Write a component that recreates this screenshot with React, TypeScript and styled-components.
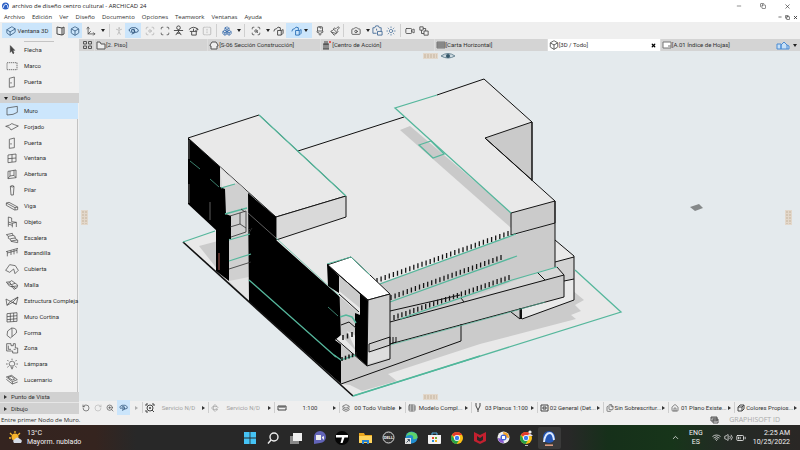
import React from 'react';
import styled, { createGlobalStyle, css } from 'styled-components';
import {
  Box, Camera, ChevronUp, Cloud, Copy, Focus, Layers, Minus, Move3d,
  PersonStanding, RotateCcw, RotateCw, Scan, Video, Volume2, Wifi, X, ZoomIn, Paintbrush,
  Paintbrush2, Boxes, ScanSearch, Rotate3d, FlipHorizontal, BatteryMedium,
  Sun, Home, Table, Files, Cuboid,
} from 'lucide-react';

const Global = createGlobalStyle`
  * { box-sizing: border-box; }
  html, body, #root { height: 100%; }
  body { margin: 0; overflow: hidden; }
  button { border: 0; padding: 0; background: none; color: inherit; font: inherit; }
  svg { display: block; flex: none; }
`;

const compact = css` font-family: Roboto, "Noto Sans", sans-serif; `;

const Page = styled.div`
  display: flex; flex-direction: column; min-height: 100vh; height: 100%;
  background: #efefef; color: #303030; font: 6px/8px "Open Sans", "Noto Sans", sans-serif;
  white-space: nowrap;
`;
const TitleBar = styled.header`
  display: flex; align-items: center; gap: 3px; height: 12px; padding: 0 9px 0 2px;
  background: #fff; color: #222;
`;
const Title = styled.h1` margin: 0; flex: 1; font: inherit; `;
const WindowButtons = styled.div<{ $gap: number }>`
  display: flex; align-items: center; gap: ${p => p.$gap}px;
`;
const MenuBar = styled.nav`
  display: flex; align-items: center; height: 10px; padding: 0 2px 0 4px; gap: 7px; background: #fff;
`;
const MenuItem = styled.button` line-height: 10px; `;
const Spacer = styled.div` flex: 1; `;

const Toolbar = styled.div`
  display: flex; align-items: center; height: 17px; padding-left: 2px; background: #efefef;
`;
const Tool = styled.button<{ $w: number; $on?: boolean; $dim?: boolean }>`
  display: flex; align-items: center; justify-content: center; gap: 2px;
  width: ${p => p.$w}px; height: 15px; color: #454545;
  ${p => p.$on && css`background: #cbe5fb; color: #31577e;`}
  ${p => p.$dim && css`opacity: .35;`}
`;
const ViewLabel = styled.span` color: #333; ${compact} `;
const Rule = styled.span`
  width: 1px; height: 13px; margin: 0 2px; background: #cfcfcf; flex: none;
`;
const Caret = styled.span<{ $right?: boolean }>`
  width: 0; height: 0; border: 2px solid transparent; flex: none;
  ${p => p.$right
    ? css`border-left: 3px solid #333; border-right: 0;`
    : css`border-top: 3px solid #222; border-bottom: 0;`}
`;

const Work = styled.div` display: flex; flex: 1; min-height: 0; `;
const Sidebar = styled.aside`
  display: flex; flex-direction: column; width: 79px; background: #f0f0f0; ${compact}
`;
const SelectGroup = styled.div`
  display: grid; grid-auto-rows: 16px; margin-right: 4px; padding-bottom: 3px;
`;
const Divider = styled.div` height: 1px; margin: 2px 25px 0 24px; background: #c4c4c4; `;
const Section = styled.button`
  display: flex; align-items: center; gap: 4px; height: 10px; padding-left: 4px; background: #d1d1d1;
  & + & { border-top: 1px solid #e6e6e6; height: 12px; }
`;
const ToolList = styled.div`
  flex: 1; min-height: 0; display: grid; grid-template-rows: repeat(18, 1fr);
  padding-bottom: 4px; margin-right: 1px; border-right: 1px solid #c2c2c2;
  padding-right: 2px;
`;
const ToolRow = styled.button<{ $on?: boolean }>`
  display: flex; align-items: center; gap: 5px; padding-left: 5px; text-align: left; min-height: 0;
  ${p => p.$on && css`background: #cce6fc;`}
`;

const Main = styled.main` display: flex; flex-direction: column; flex: 1; min-width: 0; `;
const Tabs = styled.div`
  display: flex; height: 12px; background: #d4d4d4; align-items: stretch; padding-left: 1px; ${compact}
`;
const TabIcon = styled.button<{ $w: number }>`
  width: ${p => p.$w}px; display: flex; align-items: center; justify-content: center; gap: 3px;
`;
const Tab = styled.button<{ $on?: boolean }>`
  flex: 1; display: flex; align-items: center; padding: 0 4px 0 1px; min-width: 0;
  border-left: 1px solid #dedede; background: ${p => (p.$on ? '#fff' : 'transparent')};
`;
const TabText = styled.span` flex: 1; text-align: left; `;
const Viewport = styled.div`
  flex: 1; min-height: 0; background: #e4eaed;
  > svg { width: 100%; height: 100%; }
`;
const Options = styled.div` display: flex; align-items: center; height: 13px; ${compact} `;
const NavTools = styled.div` display: flex; align-items: center; width: 63px; `;
const Option = styled.button<{ $dim?: boolean }>`
  flex: 1; min-width: 0; display: flex; align-items: center; height: 11px; gap: 1px;
  padding: 0 3px 0 2px; border-left: 1px solid #cecece; color: ${p => (p.$dim ? '#a2a2a2' : '#333')};
  & svg { color: ${p => (p.$dim ? '#9a9a9a' : '#444')}; }
`;
const OptionText = styled.span` flex: 1; text-align: center; `;
const Status = styled.footer`
  display: flex; align-items: center; height: 11px; padding: 0 20px 0 1px; gap: 10px;
`;
const Brand = styled.span` color: #aaa; font: 7px/9px "Open Sans", sans-serif; `;

const Taskbar = styled.footer`
  display: grid; grid-template-columns: 1fr auto 1fr; align-items: center; height: 25px;
  color: #f2f2f2; padding: 0 10px 0 9px; font-size: 7px; line-height: 9px; ${compact}
  background: linear-gradient(90deg, #342420 0%, #35241f 12%, #282828 17%, #282828 71%, #16301a 76%, #17351a 84%, #242a25 91%, #2a2725 100%);
`;
const Weather = styled.div` display: flex; align-items: center; gap: 3px; `;
const Apps = styled.div` display: flex; `;
const TaskApp = styled.button<{ $on?: boolean }>`
  width: 23px; height: 22px; display: flex; align-items: center; justify-content: center;
  border-radius: 2px; background: ${p => (p.$on ? '#3a3a3a' : 'transparent')};
`;
const Tray = styled.div`
  display: flex; align-items: center; justify-content: flex-end; gap: 3px; text-align: center;
`;
const Language = styled.div` margin: 0 6px 0 6px; `;
const Clock = styled.time` text-align: right; margin-left: 4px; `;

const palette: Record<string, string> = {
  Flecha: 'M16 5 L16 25 L20 20 L24 29 L27 27 L23 19 L29 19Z',
  Marco: 'M6 8 H36 V29 H6Z',
  Puerta: 'M13 7 L28 3 V32 L13 34Z M18 18 v5',
  Muro: 'M6 9 L37 4 V22 L24 28 L6 30Z',
  Forjado: 'M2 16 L14 12 Q20 4 28 11 L40 15 L18 27 Q15 17 2 16Z',
  Ventana: 'M9 9 L33 6 V29 L9 32Z M21 8 V30 M9 20 L33 18',
  Abertura: 'M9 10 L33 6 V29 L9 32Z M15 9 V24 L27 22 V7 M9 31 L15 24 M27 22 L33 29',
  Pilar: 'M16 7 Q22 2 27 7 L25 33 H18Z M16 7 Q22 11 27 7',
  Viga: 'M4 9 L12 7 L38 21 V29 L29 30 L4 16Z M4 9 L30 23 L38 21 M30 23 V30',
  Objeto: 'M10 3 L20 6 V17 L34 19 V33 M10 3 V32 M10 18 L22 22 L34 19 M22 22 V34 M10 24 L22 28',
  Escalera: 'M4 8 L22 4 L24 10 L30 13 L31 20 L38 24 L38 32 L18 28 L16 22 L10 19 L10 13 L4 8 M10 13 L24 10 M16 20 L31 18 M18 27 L36 24',
  Barandilla: 'M3 14 L39 4 M7 13 V28 M18 10 V24 M27 8 V22 M36 5 V19 M7 18 L36 10',
  Cubierta: 'M2 22 L14 5 L31 8 L40 22 L30 32 L26 18 L14 28 L2 22',
  Malla: 'M4 9 Q14 12 20 5 L38 18 Q40 27 27 31 Q24 21 13 21Z M12 7 Q18 20 33 29 M8 14 Q20 20 30 13 M18 23 L36 21',
  'Estructura Compleja': 'M3 12 L16 19 L39 6 L34 28 L23 22 L6 31 L16 19 L34 28 M3 12 L6 31 M23 22 L39 6',
  'Muro Cortina': 'M6 8 L36 5 V31 L6 33Z M16 7 V32 M26 6 V32 M6 17 L36 14 M6 26 L36 23',
  Forma: 'M20 3 L8 12 L6 25 L16 33 L21 29 L21 9Z M20 3 Q38 3 34 18 L21 29',
  Zona: 'M5 5 H18 V11 H25 V5 H31 V18 H38 V33 H23 V27 H5Z M10 11 V22 H18 M26 22 h6',
  'Lámpara': 'M15 24 Q9 17 16 11 Q22 7 28 13 Q32 18 26 24Z M17 28 H25 M18 32 H24 M21 2 V6 M7 6 L11 10 M35 6 L31 10 M3 18 H8 M34 18 H39 M7 28 L11 25 M35 28 L31 25',
  Lucernario: 'M4 9 L20 4 L37 17 L22 23Z M4 16 L22 30 L38 24 M22 23 V30 M9 10 L19 7 L29 15 L22 18Z',
};

const Glyph = ({ name }: { name: string }) => (
  <svg width="14" height="12" viewBox="0 0 42 36" fill={name === 'Flecha' ? '#444' : 'none'} stroke="#444"
    strokeWidth="2.1" strokeLinejoin="round" strokeDasharray={name === 'Marco' ? '4 2' : undefined}>
    <path d={palette[name]} />
  </svg>
);

const toolbarGlyphs = {
  orbit: 'M3 8Q-1 5 4 3Q9 2 11 5Q12 8 8 8M4 10L8 8L6 5M4 5h3v3H4z',
  survey: 'M6 1a2 2 0 0 1 0 4a2 2 0 0 1 0-4M1 6h10M6 5v3M3 11l3-4l3 4M4 9h4',
  around: 'M1 5Q6 0 11 5M2 7h8M4 7v4h5V7M6 4v3M9 3l2 2l-3 1',
  cloudBox: 'M1 7Q1 4 4 4Q5 1 8 3L8 6M5 6h4v5H5zM9 6l2-1v4l-2 2',
  photoSet: 'M1 3h2l1-2h3l1 2h2v4M1 3v6h4M6 7h5v4H6zM5 4v2',
  route: 'M1 1h4v4H1zM5 3h3v3M6 6h5v5H6zM3 5v4h3',
};
const Mark = ({ name, color = 'currentColor', size = 11 }: { name: keyof typeof toolbarGlyphs; color?: string; size?: number }) => (
  <svg width={size} height={size} viewBox="0 0 12 12" fill="none" stroke={color} strokeLinejoin="round">
    <path d={toolbarGlyphs[name]} />
  </svg>
);

const tools = ['Muro', 'Forjado', 'Puerta', 'Ventana', 'Abertura', 'Pilar', 'Viga', 'Objeto', 'Escalera', 'Barandilla',
  'Cubierta', 'Malla', 'Estructura Compleja', 'Muro Cortina', 'Forma', 'Zona', 'Lámpara', 'Lucernario'];

const I = { size: 10, strokeWidth: 1.9 };
const S = { size: 8, strokeWidth: 1.9 };

const ticks = (x1: number, y1: number, x2: number, y2: number, n: number, h: number) =>
  Array.from({ length: n }, (_, i) => {
    const t = i / (n - 1);
    return `M${(x1 + (x2 - x1) * t).toFixed(1)} ${(y1 + (y2 - y1) * t).toFixed(1)}v${h}`;
  }).join('');

const Handle = ({ x, y, tall }: { x: number; y: number; tall?: boolean }) => (
  <g>
    <rect x={x} y={y} width={tall ? 7 : 15} height={tall ? 15 : 6} fill="#e3d8cb" />
    <path stroke="#c5b49d" strokeWidth="1" strokeDasharray="2 1"
      d={tall ? `M${x + 2} ${y + 1}v13M${x + 5} ${y + 1}v13` : `M${x + 1} ${y + 2}h13M${x + 1} ${y + 4}h13`} />
  </g>
);

const Model = () => (
  <svg viewBox="79 51 721 350" preserveAspectRatio="xMidYMid meet" role="img" aria-label="3D">
    {/* site plate and cast shadows */}
    <path fill="#e9e9e9" d="M183 242L215 231L574 268L621 312L353 396Z" />
    <path fill="#cbcbcb" d="M199 246L218 241V270Z" />
    <path fill="#cbcbcb" d="M350 385L362 391L397 381L388 374L480 344L576 319L571 315L581 311L575 305L584 300L572 290L461 310L341 360V384Z" />
    {/* roof deck */}
    <path fill="#e9e9e9" d="M276 217L298 151L404 117L512 212V236L380 283L340 297L276 240Z" />
    <path fill="#c9c9c9" d="M400 130L410 126L511 212V228Z" />
    {/* front facades */}
    <path fill="#cbcbcb" d="M380 283L512 236L555 223V267L564 275V297L461 324V341L341 384V296Z" />
    <path fill="#e9e9e9" d="M555 240L574 256V300L522 319V308L564 297V275L555 267Z" />
    <path fill="#d2d2d2" d="M555 262L574 257V279L564 281V275L555 267Z" />
    <path fill="#d8d8d8" d="M463 301L537 272L557 267L564 275Z" />
    {/* left volume */}
    <path fill="#e9e9e9" stroke="#151515" d="M188 138L259 115L346 196L276 217Z" />
    <path fill="#d9d9d9" stroke="#151515" d="M276 217L346 196V217L276 240Z" />
    <path fill="#d0d0d0" d="M220 167L249 193V302L229 284V220L220 190Z" />
    <path fill="#e4e4e4" d="M220 168L237 183L222 187ZM229 281L249 277V302Z" />
    <path d="M188 138L220 167V187L225 189L226 214L231 216V240L217 231L188 204Z" />
    <path d="M216 229H229V281L216 271Z" />
    <path d="M248 193L276 217V240L340 297L358 313V323L341 316V384L249 302Z" />
    {/* upper right volume */}
    <path fill="#e9e9e9" d="M395 108L484 79L532 122L485 138L555 201L511 213Z" />
    <path fill="#cacaca" stroke="#151515" d="M485 138L532 122V180Z" />
    <path fill="#cbcbcb" stroke="#151515" d="M511 213L555 201V223L511 235Z" />
    {/* black edges */}
    <g fill="none" stroke="#101010">
      <path d="M298 151L404 117M437 95L484 79L532 122V181M485 138L555 201V267" />
      <path d="M555 240L574 256V300L522 319M555 262L574 257M564 281L574 279M511 312L520 319V308" />
      <path d="M390 322L564 275L557 267M564 275V297L390 344M537 272L545 280" />
      <path d="M390 311L460 295M461 324V341L341 384M461 298L464 302" />
      <path strokeWidth="2" d="M521 308V319" />
      <path strokeWidth="1.6" d="M183 242L353 396" />
    </g>
    {/* handrail posts */}
    <path stroke="#151515" strokeWidth="1.3" d={ticks(377, 278, 508, 231, 33, 5)} />
    <path stroke="#151515" strokeWidth="1.3" d={ticks(391, 295, 501, 255, 28, 5)} />
    <path stroke="#151515" strokeWidth="1.3" d={ticks(394, 315, 509, 275, 30, 5)} />
    {/* slab lines */}
    <g fill="none" stroke="#55b79c" strokeWidth="1.3">
      <path d="M346 196L259 115M183 242L215 231M437 95L395 108L511 213M353 396L621 312L575 270" />
      <path d="M380 284L516 234M390 302L517 256M400 319L512 280L557 267M249 280L336 357" />
      <path d="M419 145L431 141L444 154L433 158Z" />
      <path d="M221 188L235 184M225 214L247 208M229 240L250 234M229 261L251 254" />
      <path strokeWidth="0.7" d="M390 345L500 315L545 302M276 238L356 311M190 161L200 169M210 179L219 187M328 307L338 316" />
    </g>
    <path fill="none" stroke="#303030" strokeWidth="0.8" d="M230 216L246 211V232L231 237M230 227L240 224L246 228M240 224V213M229 269L251 262M241 209l4 3M248 228l3 3m1-3l-3 5" />
    <path fill="none" stroke="#777" strokeWidth="0.8" d="M248 213L276 238M189 140V159M189 184V203M210 202V220" />
    <path stroke="#a75a50" d="M219 253V270" />
    {/* projecting frame */}
    <path fill="#cbcbcb" d="M339 276L360 293V314L356 315V353L341 341Z" />
    <path fill="#e9e9e9" d="M339 291L360 308V314L339 296ZM335 340L341 335L356 351V356ZM347 331L356 336V350Z" />
    <path fill="#fff" stroke="#151515" d="M327 265L351 257L390 294L368 300Z" />
    <path stroke="#55b79c" d="M327 264L351 257L370 275" fill="none" />
    <path fill="#cfcfcf" stroke="#151515" d="M368 300L390 294V359L367 366Z" />
    <path d="M327 264L339 276V293L328 286ZM360 293L368 300L367 366L355 355V313L360 315Z" />
    <path fill="none" stroke="#151515" d="M327 264L368 301M339 294L359 312M341 325L349 322L356 328M336 339L367 366" />
    <path fill="#dedede" d="M368 353L389 347V358L368 364Z" />
    <path fill="none" stroke="#151515" d="M369 344L390 337V345L369 352ZM390 344L396 342V337M393 337V343" />
    <path fill="none" stroke="#55b79c" strokeWidth="1.5" d="M340 317L346 315L352 317L356 323M334 355L341 360L356 355" />
    <path stroke="#151515" strokeWidth="1.5" d={ticks(343, 335, 352, 332, 3, 5) + ticks(342, 357, 356, 352, 5, 4)} />
    <path stroke="#50b79b" strokeWidth="1.8" d="M353 396L480 356" />
    {/* origin marker, page handles and view centre */}
    <path fill="#85898a" d="M690 207L699 204L703 208L695 211Z" />
    <Handle x={423} y={53} /><Handle x={423} y={394} />
    <Handle x={81} y={210} tall /><Handle x={785} y={210} tall />
    <path fill="#cbd8df" stroke="#6b8795" d="M441 56Q448 51 455 56Q448 60 441 56" />
    <circle cx="448" cy="56" r="2" fill="#35576a" />
  </svg>
);

const options: [React.ReactNode, string, boolean?][] = [
  [<svg width="10" height="10" viewBox="0 0 10 10" fill="none" stroke="#444"><circle cx="5" cy="5" r="3" /><path d="M7 7l2 2M1 3V1h2M7 1h2v2M1 7v2h2M4 5h2M5 4v2" /></svg>, 'Servicio N/D', true],
  [<Rotate3d {...S} />, 'Servicio N/D', true],
  [<svg width="10" height="6" viewBox="0 0 10 6" fill="none" stroke="currentColor"><path d="M1 1h8v4H1zM3 1v2M5 1v2M7 1v2" /></svg>, '1:100'],
  [<Layers {...S} />, '00 Todo Visible'],
  [<Table {...S} />, 'Modelo Compl...'],
  [<svg width="8" height="9" viewBox="0 0 8 9" fill="none" stroke="currentColor"><path d="M2 0v3l2 4 2-4V0M4 7v2" /></svg>, '03 Planos 1:100'],
  [<svg width="9" height="8" viewBox="0 0 9 8" fill="none" stroke="currentColor"><path d="M1 1h7v6H1zM3 3h3v2H3z" /></svg>, '02 General (Det...'],
  [<Files {...S} />, 'Sin Sobrescritur...'],
  [<Home {...S} />, '01 Plano Existe...'],
  [<svg width="8" height="8" viewBox="0 0 8 8" fill="none" stroke="currentColor"><path d="M1 3h4v4H1zM1 3l2-2h4v4L5 7M5 3l2-2" /></svg>, 'Colores Propios...'],
];

const tabs: [React.ReactNode, string][] = [
  [<svg width="10" height="9" viewBox="0 0 10 9" fill="#eee" stroke="#555"><path d="M1 1h3l1 2h4v5H1z" /></svg>, '[2. Piso]'],
  [<svg width="10" height="9" viewBox="0 0 10 9" fill="#eee" stroke="#555"><path d="M1 4l2-3h4l2 3v1H8v3H2V5H1z" /></svg>, '[S-06 Sección Construcción]'],
  [<svg width="10" height="9" viewBox="0 0 10 9" fill="none" stroke="#444"><path d="M1 8h6M2 8V3h4v5M1 3h6M2 1h4M4 3v5" /><circle cx="8" cy="1" r="1" fill="#e33" stroke="none" /></svg>, '[Centro de Acción]'],
  [<svg width="10" height="8" viewBox="0 0 10 8" fill="#999" stroke="#777"><path d="M1 1h8v6H1zM1 3h8M1 5h8" /></svg>, '[Carta Horizontal]'],
  [<Box size={10} strokeWidth={2} color="#444" />, '[3D / Todo]'],
  [<svg width="10" height="8" viewBox="0 0 10 8" fill="#fff" stroke="#777"><path d="M1 1h8v6H1zM6 5h3" /></svg>, '[A.01 Índice de Hojas]'],
];

const ChromeMark = ({ badge }: { badge?: boolean }) => (
  <svg width="14" height="16" viewBox="0 0 14 16">
    <circle cx="7" cy="8" r="6" fill="#fbc116" />
    <path fill="#e33b2e" d="M7 8L1.8 5A6 6 0 0 1 12.2 5H7Z" />
    <path fill="#27a349" d="M7 8L4.5 9.5L1.8 5A6 6 0 0 0 6.5 14L9.5 9.5Z" />
    <circle cx="7" cy="8" r="3" fill="#fff" /><circle cx="7" cy="8" r="2.2" fill="#3d7df0" />
    {badge && <><circle cx="11" cy="2" r="1.6" fill="#eee" /><path fill="#dde" d="M8 6Q11 2 14 6Z" /><path stroke="#bbb" d="M6 15.5h3" /></>}
  </svg>
);

const apps: [string, React.ReactNode][] = [
  ['Inicio', <svg width="12" height="12" viewBox="0 0 12 12" fill="#45c3f5"><path d="M0 0h5.6v5.6H0zM6.4 0H12v5.6H6.4zM0 6.4h5.6V12H0zM6.4 6.4H12V12H6.4z" /></svg>],
  ['Buscar', <svg width="12" height="12" viewBox="0 0 12 12" fill="none" stroke="#eee" strokeWidth="1.4"><circle cx="7" cy="5" r="4" /><path d="M4 8L1 11.5" /></svg>],
  ['Vista de tareas', <svg width="14" height="12" viewBox="0 0 14 12"><path fill="#888" d="M1 4h9v8H1z" /><path fill="#eee" d="M4 1h9v8H4z" /></svg>],
  ['Chat', <svg width="13" height="13" viewBox="0 0 13 13"><path fill="#6264b8" d="M1 13V6A6 6 0 1 1 7 12Z" /><path fill="#eee" d="M3 4h5v5H3zM9 6l2-1v4L9 7z" /></svg>],
  ['T', <svg width="14" height="14" viewBox="0 0 14 14"><circle cx="7" cy="7" r="7" fill="#050505" /><path fill="#fff" d="M1 4h12v2.5H9.5L7.5 12H5.5L7 6.5H1z" /></svg>],
  ['Archivos', <svg width="13" height="12" viewBox="0 0 13 12"><path fill="#e9a51e" d="M0 1h5l1 2h7v8H0z" /><path fill="#ffd45c" d="M0 4h13v7H0z" /><path fill="#2a84d2" d="M3 8h7v4H8v-2H5v2H3z" /></svg>],
  ['Dell', <svg width="13" height="13" viewBox="0 0 13 13"><circle cx="6.5" cy="6.5" r="5.5" fill="#333" stroke="#ddd" /><text x="6.5" y="8" fontSize="4" fontWeight="700" fill="#eee" textAnchor="middle">DELL</text></svg>],
  ['Edge', <svg width="13" height="13" viewBox="0 0 13 13"><circle cx="6.5" cy="6.5" r="6" fill="#218ed1" /><path fill="#5ed26a" d="M6 1Q13 1 12.5 7Q10 9 8 8Q9 4 5 4Q2 4 1 6Q2 1 6 1" /><path fill="#ddd" d="M0 7h6v6H0z" /><path stroke="#456" d="M1.500 11.500l3-3M2.500 8.500h2v2" fill="none" /></svg>],
  ['Store', <svg width="13" height="12" viewBox="0 0 13 12"><path fill="none" stroke="#50aee4" d="M4 3V1h5v2" /><path fill="#f2f2f2" d="M0 3h13v8q0 1-1 1H1q-1 0-1-1z" /><path fill="#e64d2e" d="M4 5h2v2H4z" /><path fill="#70ae31" d="M7 5h2v2H7z" /><path fill="#2a90d4" d="M4 8h2v2H4z" /><path fill="#f0b323" d="M7 8h2v2H7z" /></svg>],
  ['Chrome', <ChromeMark />],
  ['McAfee', <svg width="12" height="12" viewBox="0 0 12 12" fill="#c3202f"><path d="M0 0L6 3L12 0V9L6 12L0 9ZM3 4V8L6 9.500L9 8V4L6 6Z" fillRule="evenodd" /></svg>],
  ['Navegador', <svg width="13" height="13" viewBox="0 0 13 13"><circle cx="6.5" cy="6.5" r="6" fill="#eee" /><path fill="#f2a32b" d="M6 1Q12 1 12 7L7 6Z" /><path fill="#8a5bd0" d="M1 7Q1 12 7 12L6 8Z" /><circle cx="6.5" cy="6.5" r="3" fill="#4165d8" /><path fill="#fff" d="M5 5h3v3H5z" /></svg>],
  ['Chrome perfil', <ChromeMark badge />],
  ['Archicad', <svg width="14" height="17" viewBox="0 0 14 17"><circle cx="7" cy="8" r="6" fill="#2456b5" /><path d="M2 13Q3 4 8 4Q11 4 12 11" fill="none" stroke="#dceaff" strokeWidth="2" /><path stroke="#e4a184" strokeWidth="1.5" d="M3 16.200h8" /></svg>],
];

export default function App() {
  return (
    <Page>
      <Global />
      <TitleBar>
        <svg width="7" height="8" viewBox="0 0 7 8"><circle cx="3.500" cy="4" r="3.500" fill="#2c5fc4" /><path d="M1 6Q2 2 4 2Q6 3 6 6" fill="none" stroke="#dce9ff" /></svg>
        <Title>archivo de diseño centro cultural - ARCHICAD 24</Title>
        <WindowButtons $gap={18}>
          <button aria-label="Minimizar"><Minus size={6} /></button>
          <button aria-label="Restaurar"><Copy size={6} /></button>
          <button aria-label="Cerrar"><X size={7} /></button>
        </WindowButtons>
      </TitleBar>
      <MenuBar>
        {['Archivo', 'Edición', 'Ver', 'Diseño', 'Documento', 'Opciones', 'Teamwork', 'Ventanas', 'Ayuda'].map(m => <MenuItem key={m}>{m}</MenuItem>)}
        <Spacer />
        <WindowButtons $gap={3}>
          <button aria-label="Minimizar vista"><Minus size={4} strokeWidth={4} /></button>
          <button aria-label="Restaurar vista"><Copy size={5} strokeWidth={3} /></button>
          <button aria-label="Cerrar vista"><X size={5} strokeWidth={4} /></button>
        </WindowButtons>
      </MenuBar>
      <Toolbar>
        <Tool $w={50} $on><Cuboid {...I} /><ViewLabel>Ventana 3D</ViewLabel></Tool>
        <Tool $w={16} aria-label="Perspectiva"><svg width="9" height="10" viewBox="0 0 9 10" fill="none" stroke="currentColor"><path d="M1 1l5 1v7L1 8zM6 2l2-1v7L6 9" /></svg></Tool>
        <Tool $w={14} $on aria-label="Axonometría"><Box {...I} /></Tool>
        <Tool $w={17} aria-label="Proyección"><Move3d {...I} /></Tool>
        <Tool $w={8} aria-label="Más proyecciones"><Caret /></Tool><Rule />
        <Tool $w={13} $dim aria-label="Caminar"><PersonStanding {...I} /></Tool>
        <Tool $w={16} $on aria-label="Orbitar"><Mark name="orbit" /></Tool>
        <Tool $w={18} $dim aria-label="Explorar"><Focus {...I} /></Tool>
        <Tool $w={12} aria-label="Encuadrar"><Scan {...I} /></Tool>
        <Tool $w={15} aria-label="Mirar"><Mark name="survey" /></Tool>
        <Tool $w={14} aria-label="Rotar"><Mark name="around" /></Tool>
        <Tool $w={14} $dim aria-label="Reflejar"><FlipHorizontal {...I} /></Tool><Rule />
        <Tool $w={16} aria-label="Filtrar"><Boxes {...I} color="#3c6fae" /></Tool>
        <Tool $w={7} aria-label="Más filtros"><Caret /></Tool><Rule />
        <Tool $w={18} aria-label="Selección"><ScanSearch {...I} /></Tool>
        <Tool $w={6} aria-label="Más selección"><Caret /></Tool>
        <Tool $w={15} aria-label="Plano de corte"><Mark name="cloudBox" /></Tool>
        <Tool $w={26} $on aria-label="Estilo 3D"><Mark name="cloudBox" color="#2b70b8" /><Caret /></Tool>
        <Tool $w={16} aria-label="Pintar"><Paintbrush2 {...I} /></Tool>
        <Tool $w={13} aria-label="Pintar todo"><Paintbrush {...I} /></Tool><Rule />
        <Tool $w={19} aria-label="Foto"><Camera {...I} /></Tool>
        <Tool $w={6} aria-label="Más foto"><Caret /></Tool>
        <Tool $w={13} aria-label="Ajustes"><Mark name="photoSet" color="#476d99" /></Tool>
        <Tool $w={14} aria-label="Sol"><Sun {...I} color="#587ca2" /></Tool><Rule />
        <Tool $w={13} aria-label="Vídeo"><Video {...I} /></Tool>
        <Tool $w={15} aria-label="Recorrido"><Mark name="route" size={10} /></Tool>
      </Toolbar>
      <Work>
        <Sidebar>
          <Divider />
          <SelectGroup>
            {['Flecha', 'Marco', 'Puerta'].map(t => <ToolRow key={t}><Glyph name={t} />{t}</ToolRow>)}
          </SelectGroup>
          <Section><Caret />Diseño</Section>
          <ToolList>
            {tools.map((t, i) => <ToolRow key={t} $on={i === 0}><Glyph name={t} />{t}</ToolRow>)}
          </ToolList>
          <Section><Caret $right />Punto de Vista</Section>
          <Section><Caret $right />Dibujo</Section>
        </Sidebar>
        <Main>
          <Tabs>
            <TabIcon $w={14} aria-label="Pestañas"><svg width="9" height="8" viewBox="0 0 9 8" fill="none" stroke="#555"><path d="M.5.5h3v2.500h-3zM5.500.5h3v2.500h-3zM.5 5h3v2.500h-3zM5.500 5h3v2.500h-3z" /></svg></TabIcon>
            {tabs.map(([icon, t], i) => (
              <Tab key={t} $on={i === 4}>{icon}<TabText>{t}</TabText>{i === 4 && <X size={5} strokeWidth={6} color="#000" />}</Tab>
            ))}
            <TabIcon $w={27} aria-label="Navegador">
              <svg width="14" height="9" viewBox="0 0 14 9" fill="#c7e0f7" stroke="#4b8bd3"><path d="M1 3h4v5H1zM5 8V4l3-3 3 3v4zM11 4l2 1v3h-2" /></svg><Caret />
            </TabIcon>
          </Tabs>
          <Viewport><Model /></Viewport>
          <Options>
            <NavTools>
              <Tool $w={13} aria-label="Deshacer"><RotateCcw {...S} /></Tool>
              <Tool $w={11} $dim aria-label="Rehacer"><RotateCw {...S} /></Tool>
              <Tool $w={14} aria-label="Ampliar"><ZoomIn {...S} /></Tool>
              <Tool $w={13} $on aria-label="Órbita"><Mark name="orbit" size={9} /></Tool>
              <Tool $w={12} $dim aria-label="Siguiente"><Caret $right /></Tool>
            </NavTools>
            {options.map(([icon, t, dim], i) => (
              <Option key={i} $dim={dim}>{icon}<OptionText>{t}</OptionText><Caret $right /></Option>
            ))}
          </Options>
        </Main>
      </Work>
      <Status>
        Entre primer Nodo de Muro.
        <Spacer />
        <svg width="9" height="8" viewBox="0 0 9 8" fill="#efefef" stroke="#555"><path d="M1 1h6v4H1zM1 2h6M3 3h5v4H3zM3 4h5" /></svg>
        <Brand>GRAPHISOFT ID</Brand>
      </Status>
      <Taskbar>
        <Weather>
          <svg width="15" height="14" viewBox="0 0 15 14"><path stroke="#f2b52a" strokeWidth="1.300" d="M6 0v2M1 2l2 2M0 7h2M11 2L9 4" /><circle cx="6" cy="6" r="3.500" fill="#f6b32b" /><path fill="#d5dbe5" d="M5 12Q3 9 6 8Q8 5 11 8Q14 9 12 12Z" /></svg>
          <div><div>13°C</div><div>Mayorm. nublado</div></div>
        </Weather>
        <Apps>{apps.map(([n, icon], i) => <TaskApp key={n} aria-label={n} $on={i === 13}>{icon}</TaskApp>)}</Apps>
        <Tray>
          <ChevronUp size={9} />
          <Language><div>ENG</div><div>ES</div></Language>
          <Wifi size={9} /><Volume2 size={9} /><BatteryMedium size={10} />
          <Clock><div>2:25 AM</div><div>10/25/2022</div></Clock>
        </Tray>
      </Taskbar>
    </Page>
  );
}
